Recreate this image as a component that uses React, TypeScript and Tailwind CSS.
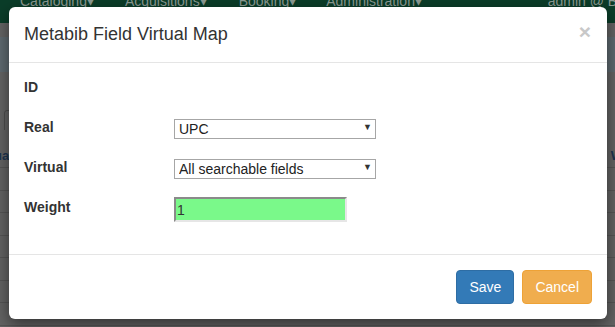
import { useState } from "react";

const navItems = [
  { label: "Cataloging", left: "ml-[20px]" },
  { label: "Acquisitions", left: "ml-[31px]" },
  { label: "Booking", left: "ml-[32px]" },
  { label: "Administration", left: "ml-[30px]" },
];

function PageBehind() {
  return (
    <div className="flex h-full flex-col">
      {/* navbar, dimmed by the backdrop */}
      <div className="flex h-[23px] shrink-0 items-start overflow-hidden bg-[#0b3d29] text-[14px] text-[#8c9a93]">
        <div className="mt-[-9px] flex w-full leading-[20px]">
          {navItems.map((n) => (
            <span key={n.label} className={n.left}>
              {n.label}▾
            </span>
          ))}
          <span className="ml-auto mr-[-20px]">admin @ BR1</span>
        </div>
      </div>
      <div className="h-[14px] shrink-0 bg-[#646464]" />
      <div className="h-[35px] shrink-0 bg-[#5f6a70]" />
      <div className="flex h-[58px] shrink-0 items-start bg-[#646464] pt-[38px]">
        <div className="ml-[4px] h-[24px] w-[20px] rounded-[3px] border border-[#4d4d4d]" />
      </div>
      <div className="flex flex-1 flex-col bg-[#636363]">
        <div className="flex h-[38px] items-end justify-between border-b border-[#555] pb-[2px] text-[13px] font-bold text-[#1c3450]">
          <span className="ml-[-6px]">ua</span>
          <span className="mr-[-8px]">W</span>
        </div>
        {Array.from({ length: 7 }).map((_, i) => (
          <div key={i} className="h-[22.5px] shrink-0 border-b border-[#555]" />
        ))}
      </div>
    </div>
  );
}

function SelectBox({ value }: { value: string }) {
  return (
    <div className="relative h-[20px] w-[202px]">
      <select
        defaultValue={value}
        className="h-[20px] w-[202px] appearance-none border border-[#a6a6a6] bg-white pl-[4px] text-[14px] leading-[18px] text-[#222] outline-none"
      >
        <option>{value}</option>
      </select>
      <span className="pointer-events-none absolute right-[4px] top-[4px] text-[9px] leading-[12px] text-[#333]">
        ▼
      </span>
    </div>
  );
}

function FormRow({ label, children }: { label: string; children?: React.ReactNode }) {
  return (
    <div className="flex h-[40px] items-center">
      <div className="w-[150px] text-[14px] font-bold text-[#333]">{label}</div>
      {children}
    </div>
  );
}

export default function App() {
  const [weight, setWeight] = useState("1");
  return (
    <div
      className="relative h-[327px] w-[615px] overflow-hidden bg-[#666]"
      style={{ fontFamily: '"Liberation Sans", Arial, sans-serif' }}
    >
      <PageBehind />

      <div className="absolute left-[9px] top-[7px] w-[598px] rounded-[6px] bg-white shadow-[0_5px_15px_rgba(0,0,0,0.5)]">
        <div className="flex items-start justify-between border-b border-[#e5e5e5] p-[15px]">
          <h4 className="text-[18px] leading-[25px] text-[#333]">Metabib Field Virtual Map</h4>
          <button className="mr-[1px] mt-[-3px] text-[21px] font-bold leading-[26px] text-[#c8c8c8]">×</button>
        </div>

        <div className="px-[15px] pb-[27px] pt-[4px]">
          <FormRow label="ID" />
          <FormRow label="Real">
            <SelectBox value="UPC" />
          </FormRow>
          <FormRow label="Virtual">
            <SelectBox value="All searchable fields" />
          </FormRow>
          <FormRow label="Weight">
            <input
              value={weight}
              onChange={(e) => setWeight(e.target.value)}
              className="mt-[5px] h-[25px] w-[173px] border-2 border-[#8a8a8a] border-b-[#e6e6e6] border-r-[#e6e6e6] bg-[#7af98a] px-[1px] text-[14px] text-[#333] outline-none"
            />
          </FormRow>
        </div>

        <div className="flex justify-end gap-[8px] border-t border-[#e5e5e5] p-[15px]">
          <button className="h-[34px] rounded-[4px] border border-[#2e6da4] bg-[#337ab7] px-[12px] text-[14px] text-white">
            Save
          </button>
          <button className="h-[34px] rounded-[4px] border border-[#eea236] bg-[#f0ad4e] px-[12px] text-[14px] text-white">
            Cancel
          </button>
        </div>
      </div>
    </div>
  );
}
